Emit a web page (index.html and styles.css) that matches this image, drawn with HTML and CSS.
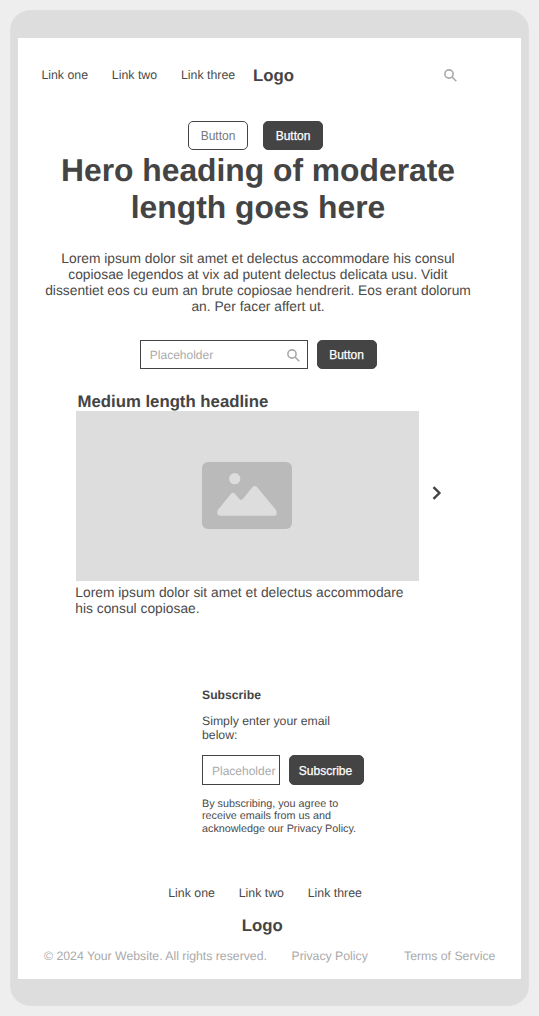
FILE: index.html
```html
<!DOCTYPE html>
<html lang="en">
<head>
<meta charset="utf-8">
<title>Your Website</title>
<link rel="stylesheet" href="styles.css">
</head>
<body>
<div class="device">
  <div class="screen">
    <header class="topbar">
      <nav class="links"><a>Link one</a><a>Link two</a><a>Link three</a></nav>
      <div class="logo">Logo</div>
      <svg class="search" viewBox="0 0 13 13"><circle cx="5" cy="5" r="4.1"/><path d="M8 8l4.3 4.3"/></svg>
    </header>
    <section class="hero">
      <div class="actions"><button class="btn outline">Button</button><button class="btn">Button</button></div>
      <h1>Hero heading of moderate<br>length goes here</h1>
      <p class="lead">Lorem ipsum dolor sit amet et delectus accommodare his consul<br>copiosae legendos at vix ad putent delectus delicata usu. Vidit<br>dissentiet eos cu eum an brute copiosae hendrerit. Eos erant dolorum<br>an. Per facer affert ut.</p>
      <div class="searchrow">
        <div class="field"><span>Placeholder</span><svg class="search" viewBox="0 0 13 13"><circle cx="5" cy="5" r="4.1"/><path d="M8 8l4.3 4.3"/></svg></div>
        <button class="btn">Button</button>
      </div>
    </section>
    <section class="feature">
      <h2>Medium length headline</h2>
      <div class="carousel">
        <div class="picture">
          <svg class="image" viewBox="0 0 90 67"><rect class="plate" width="90" height="67" rx="6"/><circle class="shape" cx="32.7" cy="16.7" r="5.6"/><path class="shape" d="M15.7 48.2L28.8 32Q31 29.6 33.2 32L37 36.8Q39 39 41 36.8L50.4 25.2Q52.8 22.6 55.2 25.2L74.2 48.2Q75.8 53.7 71.8 53.7H18.3Q14.2 53.4 15.7 48.2Z"/></svg>
        </div>
        <svg class="chevron" viewBox="0 0 10 14"><path d="M1.5 1.2L7.4 7L1.5 12.8"/></svg>
      </div>
      <p class="caption">Lorem ipsum dolor sit amet et delectus accommodare<br>his consul copiosae.</p>
    </section>
    <section class="subscribe">
      <h3>Subscribe</h3>
      <p class="intro">Simply enter your email<br>below:</p>
      <div class="form"><div class="field small"><span>Placeholder</span></div><button class="btn wide">Subscribe</button></div>
      <p class="note">By subscribing, you agree to<br>receive emails from us and<br>acknowledge our Privacy Policy.</p>
    </section>
    <footer class="footer">
      <nav class="links"><a>Link one</a><a>Link two</a><a>Link three</a></nav>
      <div class="logo">Logo</div>
      <div class="legal"><span class="copy">© 2024 Your Website. All rights reserved.</span><span class="privacy">Privacy Policy</span><span>Terms of Service</span></div>
    </footer>
  </div>
</div>
</body>
</html>
```
FILE: styles.css
```css
* { box-sizing: border-box; margin: 0; padding: 0; }
body { background: #eee; padding: 10px; font: 12px/14px "Liberation Sans", Arial, sans-serif; color: #444; white-space: nowrap; text-rendering: geometricPrecision; }
.device { width: 519px; height: 996px; border: 1px solid #e0e0e0; border-radius: 20px; background: #ddd; padding: 27px 7px; }
.screen { width: 503px; height: 941px; background: #fff; }
.topbar { display: flex; align-items: center; height: 75px; padding-left: 23.4px; }
.links { display: flex; gap: 23.8px; font-size: 12.35px; color: #4a4a4a; }
.topbar .links { padding-bottom: 1px; }
.logo { font-weight: bold; font-size: 16.8px; line-height: 20px; }
.topbar .logo { margin-left: 17.8px; }
.search { width: 13px; height: 13px; fill: none; stroke: #aaa; stroke-width: 1.6; }
.topbar .search { margin: 0 0 0 150.2px; }
.hero { display: flex; flex-direction: column; align-items: center; padding-right: 23px; }
.actions { display: flex; gap: 15px; margin: 8px 5px 0 0; }
.btn { width: 60px; height: 29px; border: 1px solid #444; border-radius: 5px; background: #444; color: #fff; font: 12px/14px "Liberation Sans", Arial, sans-serif; text-align: center; -webkit-text-stroke: .25px #fff; }
.btn.outline { background: #fff; color: #777; -webkit-text-stroke: 0; }
h1 { font-size: 31.8px; line-height: 37px; text-align: center; margin-top: 2px; }
.lead { font-size: 13.8px; line-height: 16px; text-align: center; margin-top: 25px; color: #4a4a4a; }
.searchrow { display: flex; gap: 9px; margin-top: 25px; }
.field { display: flex; align-items: center; justify-content: space-between; width: 168px; height: 29px; border: 1px solid #444; padding: 1px 6.5px 0 9.3px; color: #aaa; }
.feature { padding: 23px 0 0 58px; }
h2 { font-size: 16.75px; line-height: 19px; padding-left: 1.5px; }
.carousel { display: flex; align-items: center; gap: 13px; }
.picture { display: flex; align-items: center; justify-content: center; width: 343px; height: 170px; background: #ddd; padding: 0 1px 1px 0; }
.image { width: 90px; height: 67px; }
.plate { fill: #bababa; }
.shape { fill: #ddd; }
.chevron { width: 10px; height: 14px; margin-top: -6px; fill: none; stroke: #444; stroke-width: 2.4; }
.caption { font-size: 13.8px; line-height: 16px; margin: 4px 0 0 -.7px; color: #4a4a4a; }
.subscribe { padding: 71px 0 0 184px; }
h3 { font-size: 12.2px; line-height: 14px; }
.intro { font-size: 12.25px; line-height: 14px; margin-top: 12px; color: #4a4a4a; }
.form { display: flex; gap: 9px; margin-top: 13px; }
.field.small { width: 78px; height: 30px; padding: 1px 0 0 9px; }
.btn.wide { width: 75px; height: 30px; padding: 1px 2px 0 0; }
.note { font-size: 10.8px; line-height: 12.5px; margin-top: 12.6px; color: #4a4a4a; }
.footer { padding-top: 50.9px; }
.footer .links { padding-left: 150.2px; }
.footer .logo { margin: 16px 0 0 223.7px; }
.legal { display: flex; margin-top: 13px; padding-left: 26px; color: #aaa; font-size: 12.27px; }
.copy { width: 247.5px; }
.privacy { width: 112.5px; }
```
